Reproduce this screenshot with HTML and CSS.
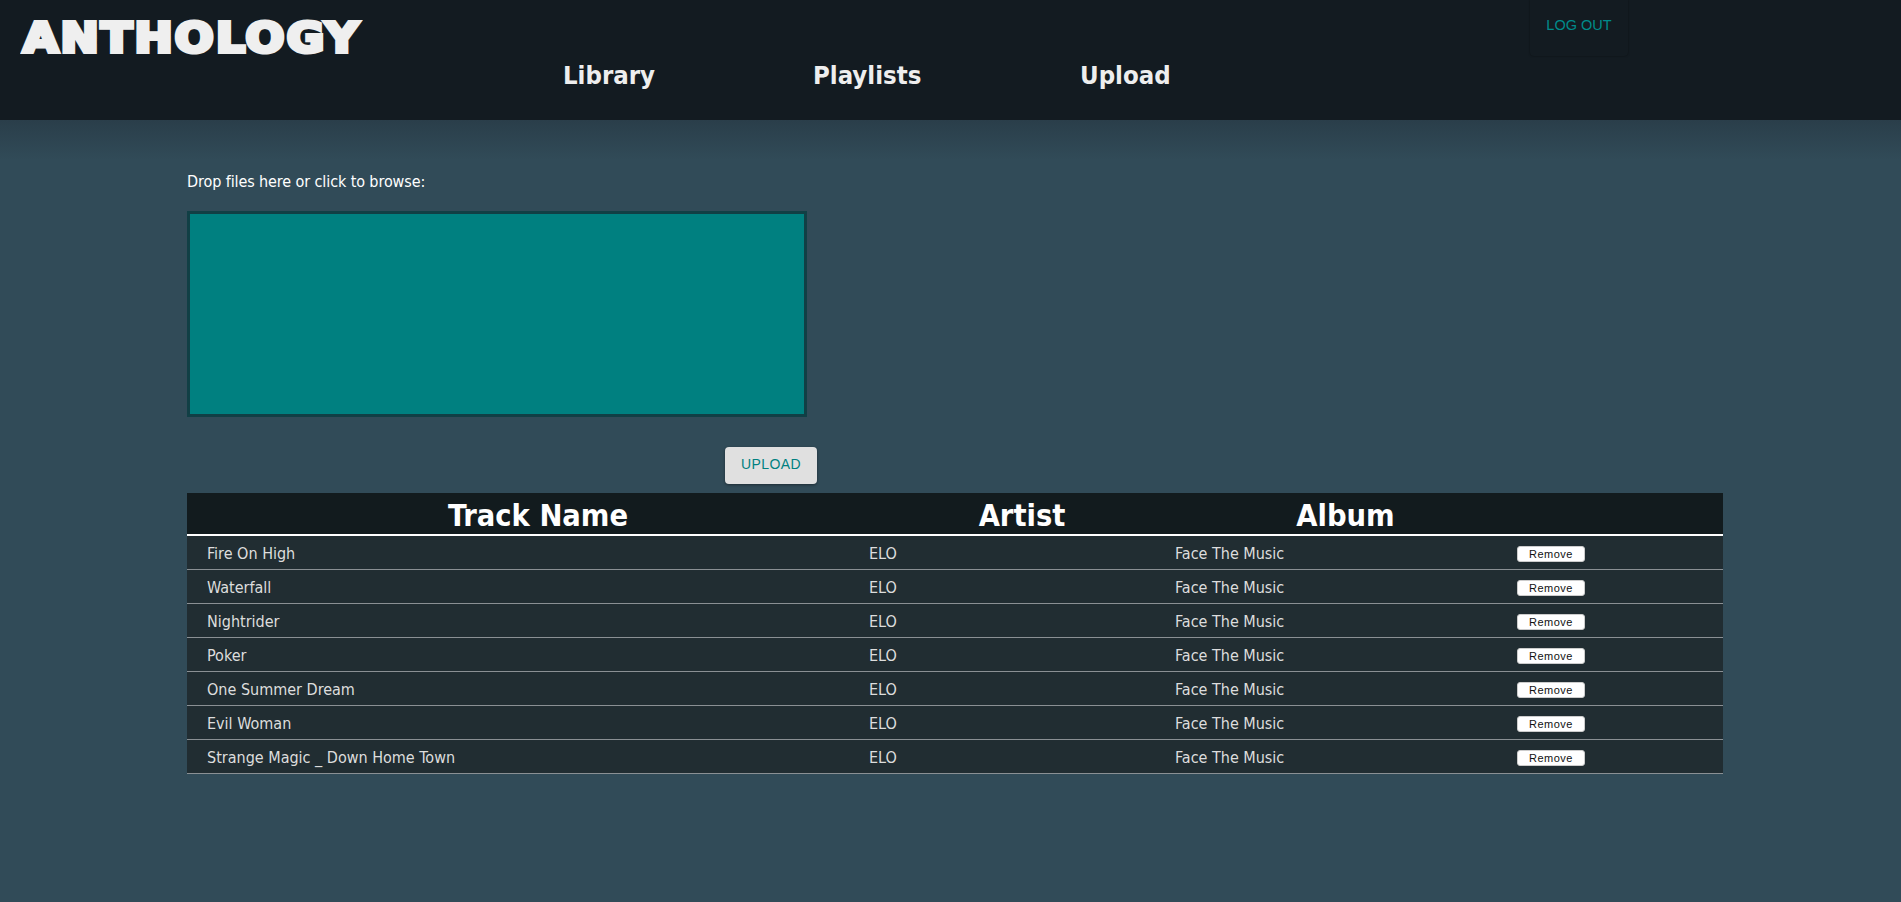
FILE: index.html
```html
<!DOCTYPE html>
<html lang="en">
  <head>
    <meta charset="UTF-8" />
    <title>Anthology - Upload</title>
    <link rel="stylesheet" href="styles.css">
  </head>
  <body>
    <header class="topbar">
      <div class="logo"><span class="logo-text">ANTHOLOGY</span></div>
      <nav class="nav">
        <a class="nav-link nav-library" href="#">Library</a>
        <a class="nav-link nav-playlists" href="#">Playlists</a>
        <a class="nav-link nav-upload" href="#">Upload</a>
      </nav>
      <a class="logout" href="#">LOG OUT</a>
    </header>

    <main class="content">
      <p class="drop-label">Drop files here or click to browse:</p>
      <div class="dropzone"></div>
      <div class="upload-row">
        <button class="upload-btn">UPLOAD</button>
      </div>

      <table class="tracks">
        <thead>
          <tr>
            <th class="col-track">Track Name</th>
            <th class="col-artist">Artist</th>
            <th class="col-album">Album</th>
            <th class="col-action"></th>
          </tr>
        </thead>
        <tbody>
          <tr><td>Fire On High</td><td>ELO</td><td>Face The Music</td><td><button class="remove-btn">Remove</button></td></tr>
          <tr><td>Waterfall</td><td>ELO</td><td>Face The Music</td><td><button class="remove-btn">Remove</button></td></tr>
          <tr><td>Nightrider</td><td>ELO</td><td>Face The Music</td><td><button class="remove-btn">Remove</button></td></tr>
          <tr><td>Poker</td><td>ELO</td><td>Face The Music</td><td><button class="remove-btn">Remove</button></td></tr>
          <tr><td>One Summer Dream</td><td>ELO</td><td>Face The Music</td><td><button class="remove-btn">Remove</button></td></tr>
          <tr><td>Evil Woman</td><td>ELO</td><td>Face The Music</td><td><button class="remove-btn">Remove</button></td></tr>
          <tr><td>Strange Magic _ Down Home Town</td><td>ELO</td><td>Face The Music</td><td><button class="remove-btn">Remove</button></td></tr>
        </tbody>
      </table>
    </main>
  </body>
</html>
```

FILE: styles.css
```css
html {
  height: 100%;
}

body {
  margin: 0;
  min-height: 100%;
  background: #314b58;
  color: #fff;
  font-family: "DejaVu Sans", sans-serif;
  font-stretch: condensed;
}

.topbar {
  display: flex;
  height: 120px;
  background: #131b21;
  box-sizing: border-box;
  box-shadow: 0 8px 24px rgba(0, 0, 0, 0.12);
}

.logo {
  width: 342px;
  height: 50px;
  margin: 13px 0 0 23px;
}

.logo-text {
  display: inline-block;
  font-family: "DejaVu Sans", sans-serif;
  font-stretch: normal;
  font-size: 40px;
  font-weight: bold;
  line-height: 50px;
  letter-spacing: 2px;
  color: #efefef;
  -webkit-text-stroke: 4px #efefef;
  white-space: nowrap;
  transform: scaleX(1.14);
  transform-origin: left center;
}

.nav {
  display: flex;
  margin-left: 198px;
  padding-top: 57px;
}

.nav-link {
  font-size: 25.5px;
  font-weight: bold;
  line-height: 36px;
  color: #eee;
  text-decoration: none;
}

.nav-library { width: 250px; }
.nav-playlists { width: 267px; }
.nav-upload { width: 100px; }

.logout {
  width: 98px;
  height: 56px;
  margin-left: 350px;
  padding-top: 17px;
  box-sizing: border-box;
  border-radius: 0 0 4px 4px;
  text-align: center;
  font-family: "Liberation Sans", sans-serif;
  font-size: 14.5px;
  line-height: 16px;
  color: #008b8b;
  text-decoration: none;
  box-shadow: 0 0 2px rgba(0, 0, 0, 0.5);
}

.content {
  padding: 0 178px 0 187px;
  background: linear-gradient(#2a3e4a, #314b58 40px);
}

.drop-label {
  margin: 0;
  padding-top: 52px;
  font-size: 16px;
  line-height: 20px;
  letter-spacing: -0.1px;
}

.dropzone {
  width: 620px;
  height: 206px;
  margin-top: 19px;
  box-sizing: border-box;
  background: #008080;
  border: 3px solid #113f45;
}

.upload-row {
  display: flex;
  height: 76px;
  padding-top: 30px;
  box-sizing: border-box;
  padding-left: 538px;
}

.upload-btn {
  width: 92px;
  height: 37px;
  padding: 0 0 3px;
  border: 0;
  border-radius: 4px;
  background: #e0e0e0;
  color: #008080;
  font-family: "Liberation Sans", sans-serif;
  font-size: 14px;
  letter-spacing: 0.4px;
  box-shadow: 0 1px 3px rgba(0, 0, 0, 0.4);
}

.tracks {
  width: 1536px;
  border-collapse: collapse;
  table-layout: fixed;
}

.tracks th {
  height: 41px;
  padding: 4px 0 0;
  box-sizing: border-box;
  background: #121b1e;
  border-bottom: 2px solid #fff;
  font-size: 30.5px;
  line-height: 37px;
  font-weight: bold;
}

.col-track { width: 682px; }
.col-artist { width: 306px; }
.col-album { width: 341px; }

.tracks th.col-track {
  padding-left: 20px;
}

.tracks td {
  height: 34px;
  padding: 2px 0 0;
  box-sizing: border-box;
  background: #212d32;
  border-bottom: 1px solid #8a9094;
  font-size: 16px;
  color: #ddd;
}

.tracks td:first-child {
  padding-left: 20px;
}

.remove-btn {
  display: block;
  width: 68px;
  height: 16px;
  margin: 2px 0 0 1px;
  padding: 0;
  border: 1px solid #ccc;
  border-radius: 3px;
  background: #fff;
  color: #111;
  font-family: "Liberation Sans", sans-serif;
  font-size: 11px;
  letter-spacing: 0.5px;
}
```
